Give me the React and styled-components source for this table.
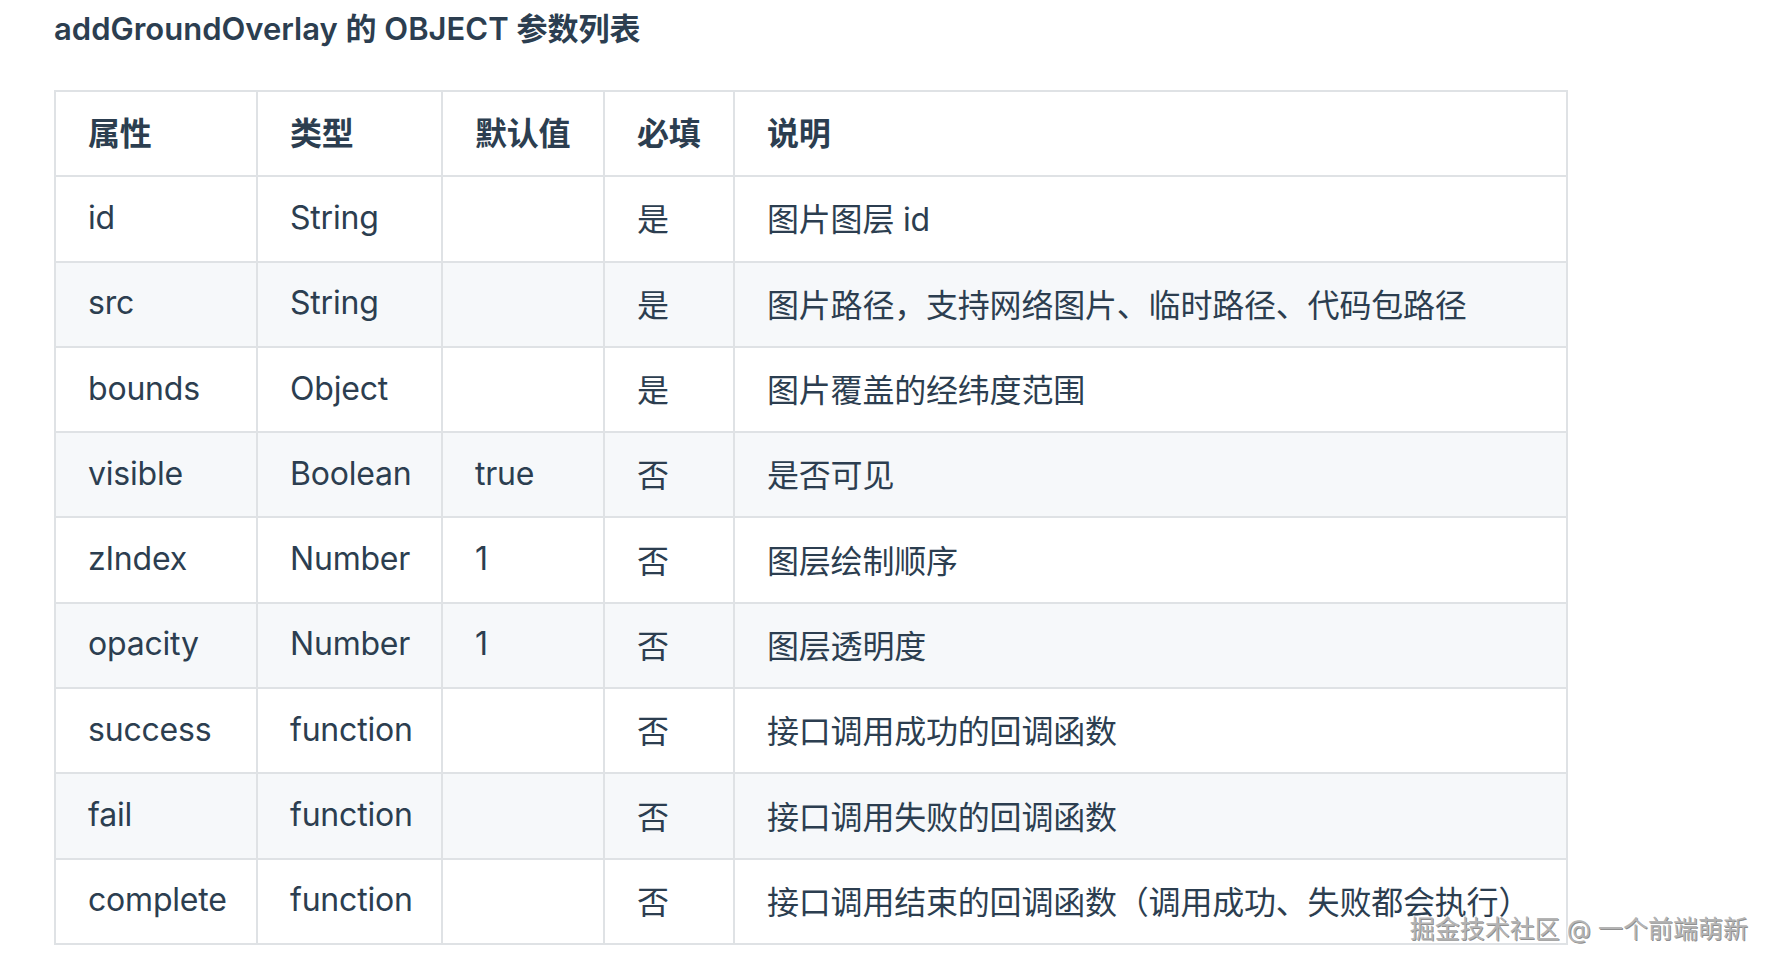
import React from 'react';
import styled, { createGlobalStyle } from 'styled-components';

const GlobalStyle = createGlobalStyle`
  html, body {
    margin: 0;
    padding: 0;
    background: #fff;
  }
  body {
    font-family: Inter, "Noto Sans CJK SC", sans-serif;
    color: #2c3e50;
  }
`;

//Table data
const columns = [
  { title: '属性', width: 202 },
  { title: '类型', width: 185 },
  { title: '默认值', width: 162 },
  { title: '必填', width: 130 },
  { title: '说明', width: 833 },
];

const rows = [
  ['id', 'String', '', '是', '图片图层 id'],
  ['src', 'String', '', '是', '图片路径，支持网络图片、临时路径、代码包路径'],
  ['bounds', 'Object', '', '是', '图片覆盖的经纬度范围'],
  ['visible', 'Boolean', 'true', '否', '是否可见'],
  ['zIndex', 'Number', '1', '否', '图层绘制顺序'],
  ['opacity', 'Number', '1', '否', '图层透明度'],
  ['success', 'function', '', '否', '接口调用成功的回调函数'],
  ['fail', 'function', '', '否', '接口调用失败的回调函数'],
  ['complete', 'function', '', '否', '接口调用结束的回调函数（调用成功、失败都会执行）'],
];

const App = () => {
  return (
    <>
      <GlobalStyle />
      <Page>
        <Title>addGroundOverlay 的 OBJECT 参数列表</Title>
        <Table>
          <colgroup>
            {columns.map((col) => (
              <col key={col.title} style={{ width: col.width }} />
            ))}
          </colgroup>
          <thead>
            <Row>
              {columns.map((col) => (
                <Head key={col.title}>{col.title}</Head>
              ))}
            </Row>
          </thead>
          <tbody>
            {rows.map((row, i) => (
              <Row key={row[0]} $striped={i % 2 === 1}>
                {row.map((cell, j) => (
                  <Cell key={j}>{cell}</Cell>
                ))}
              </Row>
            ))}
          </tbody>
        </Table>
        <Watermark>掘金技术社区 @ 一个前端萌新</Watermark>
      </Page>
    </>
  );
};

const Page = styled.div`
  position: relative;
  width: 1774px;
  height: 970px;
  box-sizing: border-box;
  padding: 9px 0 0 54px;
  overflow: hidden;
`;

const Title = styled.h3`
  margin: 0 0 41px;
  font-size: 31px;
  line-height: 40px;
  font-weight: 600;
  color: #2c3e50;
`;

const Table = styled.table`
  width: 1512px;
  table-layout: fixed;
  border-collapse: collapse;
  font-size: 32px;
  letter-spacing: -0.2px;
`;

const Row = styled.tr`
  background: ${(p) => (p.$striped ? '#f6f8fa' : '#fff')};
`;

const Head = styled.th`
  height: 85.3px;
  padding: 0 32px 5px;
  box-sizing: border-box;
  border: 2px solid #dfe2e5;
  text-align: left;
  font-weight: 600;
`;

const Cell = styled.td`
  height: 85.3px;
  padding: 0 32px 3px;
  box-sizing: border-box;
  border: 2px solid #dfe2e5;
  white-space: nowrap;
`;

const Watermark = styled.div`
  position: absolute;
  right: 26px;
  bottom: 26px;
  font-size: 25px;
  line-height: 30px;
  color: #b4b4b4;
  text-shadow: 1px 1px 0 rgba(0, 0, 0, 0.45), -1px -1px 0 #fff;
`;

export default App;
